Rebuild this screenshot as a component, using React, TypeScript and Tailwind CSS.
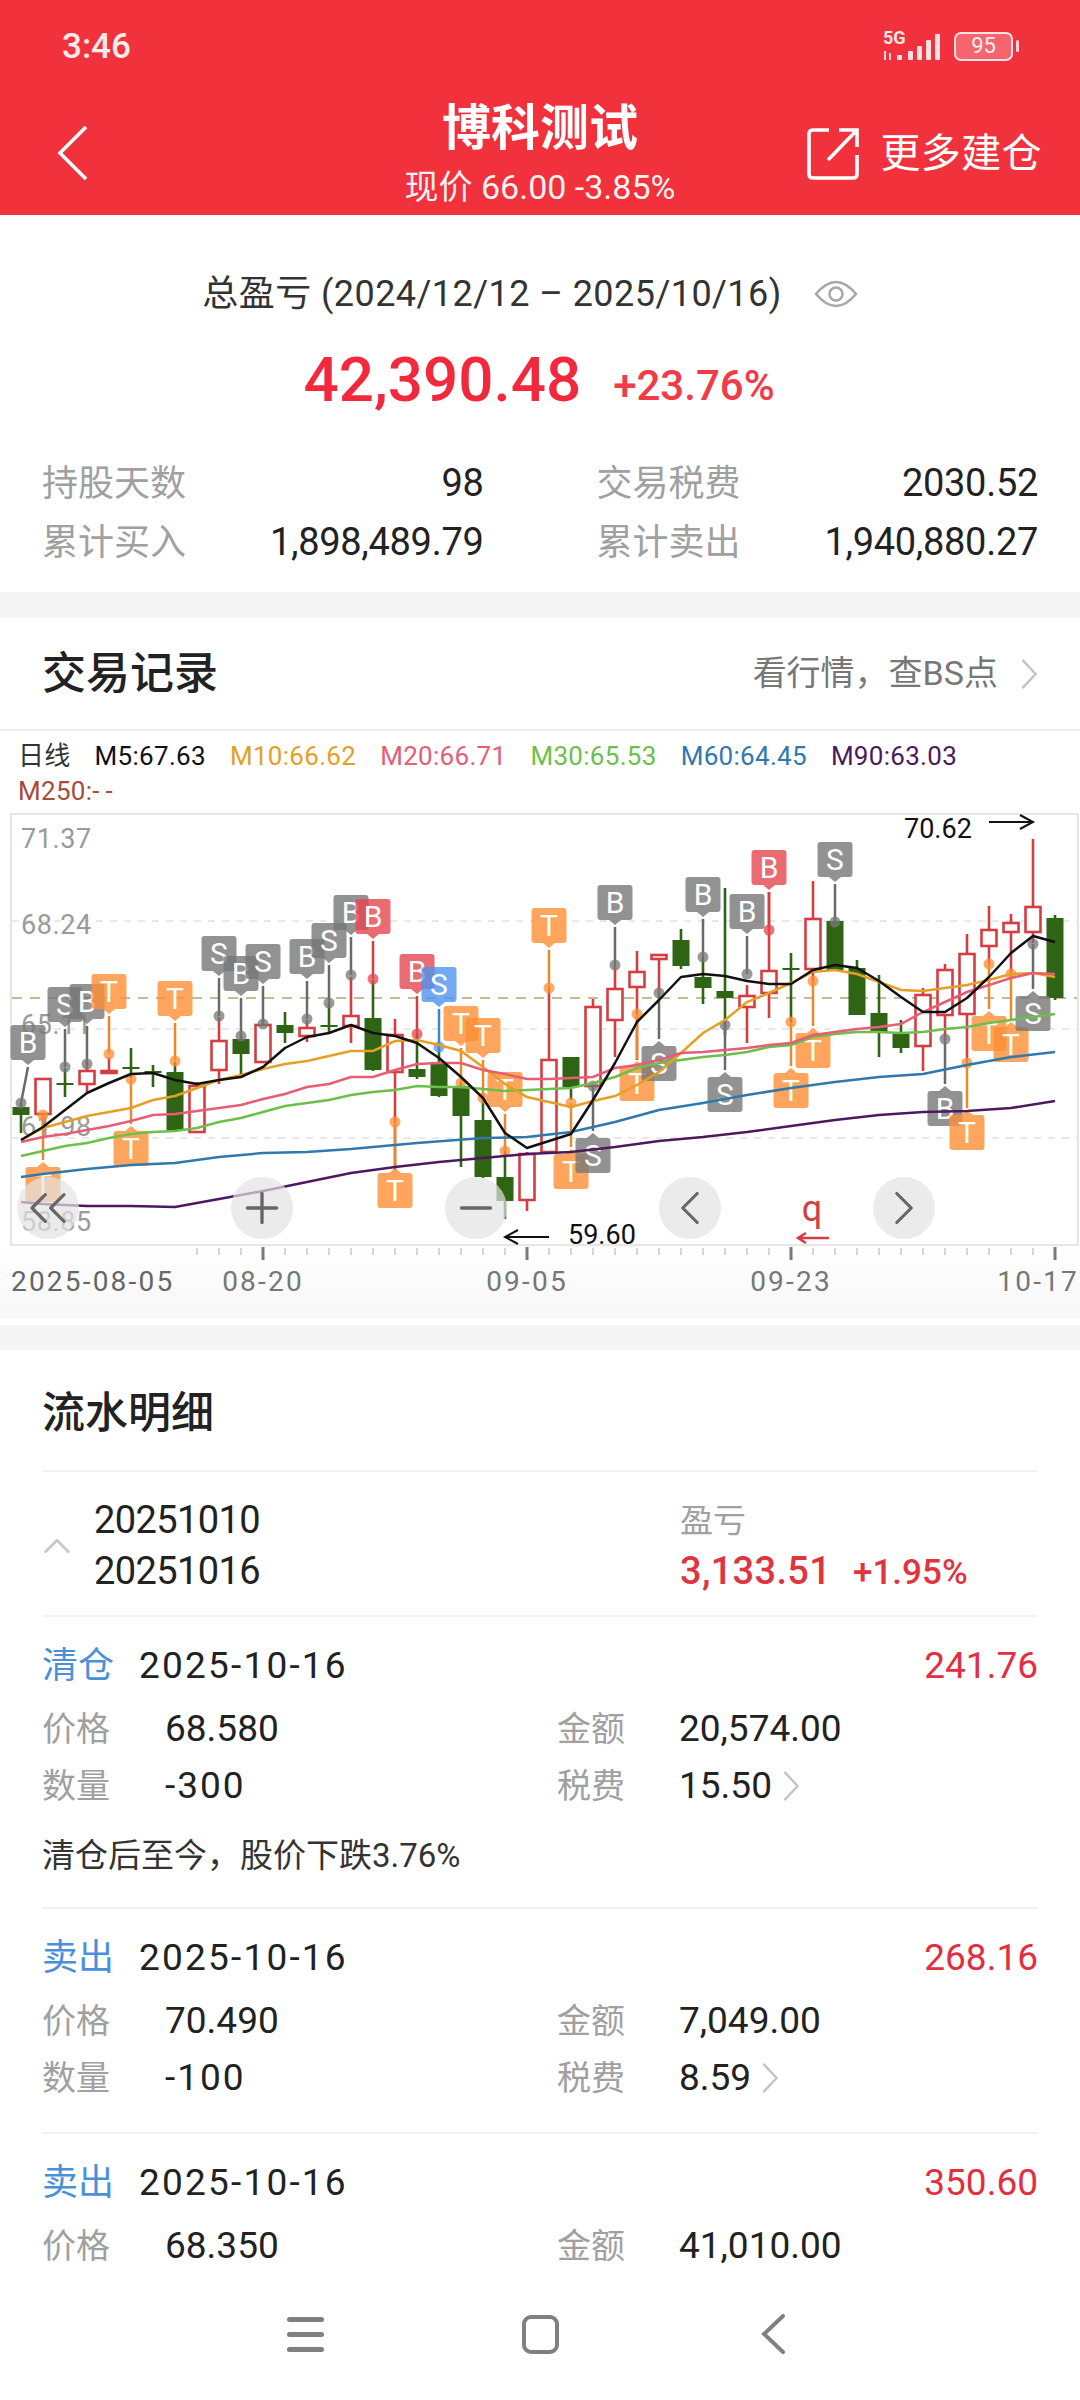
import { ChevronRight, ChevronLeft, ChevronUp, ChevronsLeft, Minus, Plus } from "lucide-react";
import type { ReactNode } from "react";

const font = '"Roboto","Noto Sans CJK SC",sans-serif';

const xAt = (i: number) => 21 + 22 * i;

// colour, wick top, body top, body bottom, wick bottom (page y)
type Candle = ["r" | "g", number, number, number, number];
const candles: Candle[] = [
  ["g", 1103, 1107, 1115, 1133],
  ["r", 1078, 1078, 1115, 1127],
  ["g", 1068, 1083, 1085, 1097],
  ["r", 1063, 1070, 1085, 1093],
  ["r", 1057, 1070, 1072, 1074],
  ["g", 1048, 1067, 1069, 1078],
  ["g", 1065, 1071, 1073, 1087],
  ["g", 1062, 1072, 1131, 1131],
  ["r", 1082, 1085, 1133, 1133],
  ["r", 1017, 1040, 1071, 1084],
  ["g", 1033, 1039, 1054, 1077],
  ["r", 1020, 1024, 1063, 1063],
  ["g", 1012, 1025, 1033, 1043],
  ["r", 1020, 1027, 1037, 1042],
  ["g", 1003, 1025, 1027, 1032],
  ["r", 977, 1015, 1027, 1043],
  ["g", 980, 1018, 1070, 1071],
  ["r", 1019, 1034, 1073, 1170],
  ["g", 1033, 1069, 1077, 1079],
  ["g", 1045, 1062, 1096, 1097],
  ["g", 1082, 1086, 1116, 1167],
  ["g", 1093, 1120, 1177, 1178],
  ["g", 1148, 1177, 1201, 1219],
  ["r", 1152, 1153, 1201, 1211],
  ["r", 988, 1059, 1153, 1153],
  ["g", 1057, 1057, 1087, 1100],
  ["r", 999, 1006, 1087, 1087],
  ["r", 965, 988, 1021, 1057],
  ["r", 951, 971, 988, 1060],
  ["r", 954, 954, 960, 993],
  ["g", 929, 940, 966, 969],
  ["g", 957, 977, 988, 1004],
  ["g", 888, 991, 998, 1035],
  ["r", 985, 995, 1008, 1043],
  ["r", 892, 970, 994, 1018],
  ["g", 953, 968, 970, 1022],
  ["r", 881, 918, 970, 985],
  ["g", 918, 921, 970, 970],
  ["g", 960, 968, 1015, 1015],
  ["g", 975, 1013, 1032, 1057],
  ["g", 1020, 1034, 1048, 1053],
  ["r", 988, 994, 1047, 1071],
  ["r", 964, 969, 1016, 1040],
  ["r", 934, 953, 1015, 1063],
  ["r", 906, 929, 947, 965],
  ["r", 914, 922, 933, 977],
  ["r", 839, 906, 933, 943],
  ["g", 915, 918, 998, 1000],
];

type MarkKind = "gray" | "orange" | "red" | "blue";
// candle index, letter, colour, badge top, dot y, badge x override
type Mark = [number, string, MarkKind, number, number, number?];
const marksAbove: Mark[] = [
  [0, "B", "gray", 1025, 1103, 28],
  [2, "S", "gray", 987, 1067],
  [3, "B", "gray", 984, 1064],
  [4, "T", "orange", 974, 1054],
  [7, "T", "orange", 981, 1061],
  [9, "S", "gray", 936, 1016],
  [10, "B", "gray", 956, 1036],
  [11, "S", "gray", 944, 1024],
  [13, "B", "gray", 939, 1019],
  [14, "S", "gray", 923, 1003],
  [15, "B", "gray", 895, 975],
  [16, "B", "red", 899, 979],
  [18, "B", "red", 954, 1034],
  [19, "S", "blue", 967, 1047],
  [20, "T", "orange", 1006, 1083],
  [21, "T", "orange", 1018, 1098],
  [22, "T", "orange", 1072, 1151],
  [24, "T", "orange", 908, 988],
  [27, "B", "gray", 885, 965],
  [31, "B", "gray", 877, 957],
  [33, "B", "gray", 894, 974],
  [34, "B", "red", 850, 930],
  [37, "S", "gray", 842, 922],
];
const marksBelow: Mark[] = [
  [1, "T", "orange", 1167, 1115],
  [5, "T", "orange", 1131, 1079],
  [17, "T", "orange", 1173, 1122],
  [25, "T", "orange", 1154, 1103],
  [26, "S", "gray", 1138, 1086],
  [28, "T", "orange", 1066, 1014],
  [29, "S", "gray", 1046, 993],
  [32, "S", "gray", 1077, 1025],
  [35, "T", "orange", 1073, 1022],
  [36, "T", "orange", 1033, 981],
  [42, "B", "gray", 1091, 1039],
  [43, "T", "orange", 1115, 1063],
  [44, "T", "orange", 1016, 964],
  [45, "T", "orange", 1027, 974],
  [46, "S", "gray", 996, 944],
];

const markFill: Record<MarkKind, string> = {
  gray: "#777777",
  orange: "#ff8f35",
  red: "#e5474f",
  blue: "#4e93ef",
};
const markLine: Record<MarkKind, string> = {
  gray: "#6a6a6a",
  orange: "#e8892b",
  red: "#d43d42",
  blue: "#3f85c9",
};

const m5 = [1140, 1127, 1110, 1093, 1083, 1074, 1073, 1080, 1084, 1080, 1077, 1067, 1048, 1037, 1033, 1025, 1033, 1036, 1043, 1058, 1077, 1098, 1133, 1148, 1141, 1134, 1100, 1063, 1022, 1000, 977, 974, 976, 981, 984, 984, 970, 965, 968, 981, 997, 1012, 1012, 998, 977, 953, 936, 942];
const m10 = [1140, 1128, 1122, 1116, 1112, 1108, 1100, 1096, 1088, 1080, 1075, 1069, 1064, 1061, 1056, 1051, 1051, 1041, 1040, 1045, 1051, 1067, 1084, 1097, 1102, 1107, 1101, 1096, 1085, 1072, 1053, 1033, 1020, 1002, 993, 983, 972, 970, 974, 982, 990, 991, 988, 985, 980, 974, 973, 977];
const m20 = [1142, 1137, 1134, 1130, 1126, 1121, 1115, 1114, 1111, 1108, 1105, 1099, 1094, 1087, 1084, 1077, 1077, 1070, 1064, 1063, 1063, 1070, 1074, 1079, 1079, 1078, 1077, 1068, 1065, 1060, 1053, 1052, 1050, 1048, 1045, 1043, 1035, 1032, 1029, 1027, 1024, 1012, 1002, 992, 985, 978, 973, 974];
const m30 = [1156, 1151, 1146, 1143, 1138, 1134, 1132, 1131, 1128, 1122, 1118, 1112, 1106, 1103, 1100, 1095, 1092, 1090, 1086, 1087, 1087, 1089, 1091, 1090, 1089, 1088, 1083, 1077, 1068, 1063, 1060, 1057, 1055, 1052, 1047, 1045, 1037, 1034, 1032, 1032, 1033, 1032, 1029, 1027, 1023, 1020, 1017, 1014];
// not every candle was read for the two slow lines
const m60 = [1177, 1174, 1169, 1165, 1163, 1157, 1153, 1152, 1149, 1147, 1143, 1138, 1137, 1132, 1122, 1110, 1103, 1095, 1088, 1082, 1077, 1074, 1065, 1057, 1052];
const m60x = [0, 1, 3, 5, 7, 9, 11, 13, 15, 16, 18, 21, 23, 25, 27, 29, 31, 33, 35, 37, 39, 41, 43, 45, 47];
const m90 = [1202, 1204, 1206, 1206, 1207, 1199, 1191, 1182, 1173, 1167, 1162, 1158, 1154, 1152, 1147, 1141, 1137, 1132, 1126, 1120, 1115, 1112, 1111, 1108, 1101];
const m90x = [0, 1, 3, 5, 7, 9, 11, 13, 15, 17, 19, 21, 23, 25, 27, 29, 31, 33, 35, 37, 39, 41, 43, 45, 47];

const toPoints = (ys: number[], idx?: number[]) =>
  ys.map((y, i) => `${xAt(idx ? idx[i] : i)},${y}`).join(" ");

const Badge = ({ mark, below }: { mark: Mark; below?: boolean }) => {
  const [i, letter, kind, top, dotY, bx] = mark;
  const x = xAt(i);
  const cx = bx ?? x;
  const l = cx - 17.5;
  const r = cx + 17.5;
  const b = top + 35;
  const shape = below
    ? `M${l + 3} ${top} H${cx - 6} L${cx} ${top - 5} L${cx + 6} ${top} H${r - 3} Q${r} ${top} ${r} ${top + 3} V${b - 3} Q${r} ${b} ${r - 3} ${b} H${l + 3} Q${l} ${b} ${l} ${b - 3} V${top + 3} Q${l} ${top} ${l + 3} ${top} Z`
    : `M${l + 3} ${top} H${r - 3} Q${r} ${top} ${r} ${top + 3} V${b - 3} Q${r} ${b} ${r - 3} ${b} H${cx + 6} L${cx} ${b + 5} L${cx - 6} ${b} H${l + 3} Q${l} ${b} ${l} ${b - 3} V${top + 3} Q${l} ${top} ${l + 3} ${top} Z`;
  return (
    <g>
      <line
        x1={cx}
        y1={below ? top - 7 : b + 7}
        x2={x}
        y2={dotY}
        stroke={markLine[kind]}
        strokeWidth={2.5}
      />
      <circle cx={x} cy={dotY} r={5.5} fill={markFill[kind]} fillOpacity={0.75} />
      <path d={shape} fill={markFill[kind]} fillOpacity={0.8} />
      <text x={cx} y={top + 28} textAnchor="middle" fontSize={30} fill="#fff">
        {letter}
      </text>
    </g>
  );
};

const CandleBar = ({ c, i }: { c: Candle; i: number }) => {
  const [kind, wt, bt, bb, wb] = c;
  const x = xAt(i);
  const color = kind === "r" ? "#d43d42" : "#2f6414";
  return (
    <g>
      <line x1={x} x2={x} y1={wt} y2={bt} stroke={color} strokeWidth={2.6} />
      <line x1={x} x2={x} y1={bb} y2={wb} stroke={color} strokeWidth={2.6} />
      {kind === "r" ? (
        <rect x={x - 7.5} y={bt + 1} width={15} height={Math.max(bb - bt - 2, 2)} fill="#fff" stroke={color} strokeWidth={2.6} />
      ) : (
        <rect x={x - 8.5} y={bt} width={17} height={bb - bt} fill={color} />
      )}
    </g>
  );
};

const axisLabels = [
  { y: 848, t: "71.37" },
  { y: 934, t: "68.24" },
  { y: 1034, t: "65.11" },
  { y: 1136, t: "61.98" },
  { y: 1231, t: "58.85" },
];

const KlineChart = () => (
  <svg width={1080} height={433} viewBox="0 813 1080 433" className="block" style={{ fontFamily: font }}>
    <rect x={11} y={814} width={1067} height={431} fill="#fff" stroke="#e6e6e6" strokeWidth={2} />
    {[921, 1029, 1138].map((y) => (
      <line key={y} x1={12} x2={1077} y1={y} y2={y} stroke="#e2e2e2" strokeWidth={1.5} strokeDasharray="7 7" />
    ))}
    <line x1={12} x2={1077} y1={998} y2={998} stroke="#b9a070" strokeWidth={1.5} strokeDasharray="10 8" />
    {axisLabels.map((a) => (
      <text key={a.t} x={21} y={a.y} fontSize={27} fill="#9a9a9a" letterSpacing={0.6}>
        {a.t}
      </text>
    ))}
    {candles.map((c, i) => (
      <CandleBar key={i} c={c} i={i} />
    ))}
    {marksBelow.map((m) => (
      <Badge key={m[0]} mark={m} below />
    ))}
    {marksAbove.map((m) => (
      <Badge key={m[0]} mark={m} />
    ))}
    <polyline points={toPoints(m90, m90x)} fill="none" stroke="#4c1a5c" strokeWidth={2.5} />
    <polyline points={toPoints(m60, m60x)} fill="none" stroke="#2f79ac" strokeWidth={2.5} />
    <polyline points={toPoints(m30)} fill="none" stroke="#6cbf4b" strokeWidth={2.5} />
    <polyline points={toPoints(m10)} fill="none" stroke="#e5a024" strokeWidth={2.5} />
    <polyline points={toPoints(m20)} fill="none" stroke="#e85d75" strokeWidth={2.5} />
    <polyline points={toPoints(m5)} fill="none" stroke="#111" strokeWidth={2.5} strokeLinejoin="round" />
    <text x={904} y={838} fontSize={27} fill="#111">70.62</text>
    <path d="M989 822 H1033 M1020 815 L1033 822 L1020 829" fill="none" stroke="#111" strokeWidth={2} />
    <text x={568} y={1244} fontSize={27} fill="#111">59.60</text>
    <path d="M549 1237 H505 M518 1230 L505 1237 L518 1244" fill="none" stroke="#111" strokeWidth={2} />
    <text x={812} y={1221} textAnchor="middle" fontSize={36} fill="#d43d42">q</text>
    <path d="M829 1238 H798 M806 1233 L798 1238 L806 1243" fill="none" stroke="#d43d42" strokeWidth={2.5} />
  </svg>
);

const XAxis = () => (
  <svg width={1080} height={72} className="block" style={{ fontFamily: font }}>
    {candles.map((_, i) =>
      i < 8 ? null : (
        <line key={i} x1={xAt(i)} x2={xAt(i)} y1={2} y2={9} stroke="#c8c8c8" strokeWidth={1.5} />
      ),
    )}
    {[263, 527, 791, 1055].map((x) => (
      <line key={x} x1={x} x2={x} y1={1} y2={14} stroke="#7a7a7a" strokeWidth={3} />
    ))}
    <text x={11} y={45} fontSize={28} fill="#666" letterSpacing={2.2}>2025-08-05</text>
    <text x={263} y={45} textAnchor="middle" fontSize={28} fill="#777" letterSpacing={2.2}>08-20</text>
    <text x={527} y={45} textAnchor="middle" fontSize={28} fill="#777" letterSpacing={2.2}>09-05</text>
    <text x={791} y={45} textAnchor="middle" fontSize={28} fill="#777" letterSpacing={2.2}>09-23</text>
    <text x={1079} y={45} textAnchor="end" fontSize={28} fill="#777" letterSpacing={2.2}>10-17</text>
  </svg>
);

const ChartButton = ({ className, children }: { className: string; children: ReactNode }) => (
  <div className={`absolute top-[364px] flex h-[62px] w-[62px] items-center justify-center rounded-full bg-[#e2e2e2]/70 text-[#666] ${className}`}>
    {children}
  </div>
);

const legend = [
  { t: "M5:67.63", c: "text-[#111]" },
  { t: "M10:66.62", c: "text-[#e5a024]" },
  { t: "M20:66.71", c: "text-[#e85d75]" },
  { t: "M30:65.53", c: "text-[#6cbf4b]" },
  { t: "M60:64.45", c: "text-[#2f79ac]" },
  { t: "M90:63.03", c: "text-[#4c1a5c]" },
];

const Stat = ({ label, value }: { label: string; value: string }) => (
  <div className="flex h-[59px] items-center justify-between">
    <span className="text-[36px] text-[#a0a0a0]">{label}</span>
    <span className="text-[38px] tracking-[-0.3px] text-[#222]">{value}</span>
  </div>
);

const Chevron = ({ className }: { className: string }) => (
  <svg viewBox="0 0 18 34" className={className} fill="none" stroke="#c4c4c4" strokeWidth={2.6}>
    <path d="M2 2 L16 17 L2 32" />
  </svg>
);

type Trade = {
  kind: string;
  pnl: string;
  price: string;
  amount: string;
  qty?: string;
  tax?: string;
  note?: string;
  rowClass: string;
};

const trades: Trade[] = [
  { kind: "清仓", pnl: "241.76", price: "68.580", amount: "20,574.00", qty: "-300", tax: "15.50", note: "清仓后至今，股价下跌3.76%", rowClass: "h-[292px]" },
  { kind: "卖出", pnl: "268.16", price: "70.490", amount: "7,049.00", qty: "-100", tax: "8.59", rowClass: "h-[225px]" },
  { kind: "卖出", pnl: "350.60", price: "68.350", amount: "41,010.00", rowClass: "h-[147px]" },
];

const TradeRow = ({ trade, last }: { trade: Trade; last?: boolean }) => (
  <div className={`${trade.rowClass} ${last ? "" : "border-b-2 border-[#f1f1f1]"}`}>
    <div className="flex h-[95px] items-center pt-[2px] text-[37px]">
      <span className="w-[97px] text-[36px] text-[#4a90d9]">{trade.kind}</span>
      <span className="tracking-[2.2px] text-[#222]">2025-10-16</span>
      <span className="ml-auto text-[#e32e3f]">{trade.pnl}</span>
    </div>
    <div className="-mt-[9px] flex h-[48px] items-center pt-[4px] text-[37px] text-[#222]">
      <span className="w-[123px] text-[34px] text-[#a0a0a0]">价格</span>
      <span className="w-[392px]">{trade.price}</span>
      <span className="w-[122px] text-[34px] text-[#a0a0a0]">金额</span>
      <span>{trade.amount}</span>
    </div>
    {trade.qty && (
      <div className="mt-[11px] flex h-[48px] items-center text-[37px] text-[#222]">
        <span className="w-[123px] text-[34px] text-[#a0a0a0]">数量</span>
        <span className="w-[392px] tracking-[2px]">{trade.qty}</span>
        <span className="w-[122px] text-[34px] text-[#a0a0a0]">税费</span>
        <span>{trade.tax}</span>
        <Chevron className="ml-[10px] h-[32px] w-[18px]" />
      </div>
    )}
    {trade.note && (
      <p className="mt-[24px] text-[33px] leading-[44px] text-[#333]">{trade.note}</p>
    )}
  </div>
);

export default function App() {
  return (
    <main className="flex h-[2400px] w-[1080px] flex-col overflow-hidden bg-white" style={{ fontFamily: font }}>
      <header className="h-[215px] shrink-0 bg-[#f1323c] text-white">
        <div className="flex h-[80px] items-center justify-between pl-[62px] pr-[61px] pt-[12px]">
          <span className="text-[35px] font-medium leading-none text-white/90">3:46</span>
          <div className="flex items-center">
            <svg width={60} height={32} viewBox="0 0 60 32" className="mr-[11px]">
              <text x={0} y={14} fontSize={18} fontWeight={700} fill="#fff" fillOpacity={0.9}>5G</text>
              <path d="M2 21 V30 M7 23 V30" stroke="#fff" strokeOpacity={0.8} strokeWidth={2} />
              <rect x={14} y={25} width={5} height={5} rx={1} fill="#fff" fillOpacity={0.85} />
              <rect x={25} y={21} width={5} height={9} rx={1} fill="#fff" fillOpacity={0.85} />
              <rect x={34} y={16} width={5} height={14} rx={1} fill="#fff" fillOpacity={0.85} />
              <rect x={43} y={10} width={5} height={20} rx={1} fill="#fff" fillOpacity={0.85} />
              <rect x={52} y={4} width={5} height={26} rx={1} fill="#fff" fillOpacity={0.85} />
            </svg>
            <div className="flex h-[29px] w-[59px] items-center justify-center rounded-[7px] border-2 border-white/80 bg-white/25 text-[22px] leading-none text-white/90">
              95
            </div>
            <div className="ml-[3px] h-[12px] w-[3px] rounded bg-white/80" />
          </div>
        </div>
        <div className="relative flex h-[135px] flex-col items-center">
          <h1 className="pt-[17px] text-[49px] font-bold leading-[64px]">博科测试</h1>
          <p className="pt-[4px] text-[34px] leading-[44px] text-white/95">现价 66.00 -3.85%</p>
          <svg width={32} height={56} viewBox="0 0 32 56" fill="none" stroke="#fff" strokeWidth={3.6} className="absolute left-[57px] top-[46px]">
            <path d="M29 1 L3 27 L29 53" />
          </svg>
          <div className="absolute right-[38px] top-[47px] flex items-center">
            <svg width={54} height={54} viewBox="0 0 54 54" fill="none" stroke="#fff" strokeWidth={3.6} className="mr-[19px]">
              <path d="M22 3 H6 Q2 3 2 7 V47 Q2 51 6 51 H46 Q50 51 50 47 V28" />
              <path d="M21 33 L49 4 M32 3 H50 V20" />
            </svg>
            <span className="text-[40px] leading-none tracking-[0.4px]">更多建仓</span>
          </div>
        </div>
      </header>

      <section className="h-[377px] shrink-0 px-[42px]">
        <div className="flex h-[153px] items-center justify-center pr-[20px] pt-[4px] text-[36px] tracking-[0.45px] text-[#333]">
          <span>总盈亏 (2024/12/12 – 2025/10/16)</span>
          <svg width={44} height={36} viewBox="0 0 44 36" fill="none" stroke="#a8a8a8" strokeWidth={2.6} className="ml-[32px]">
            <path d="M2 18 Q22 -6 42 18 Q22 42 2 18 Z" />
            <circle cx={22} cy={18} r={6.5} />
          </svg>
        </div>
        <div className="flex h-[24px] items-center justify-center pr-[2px]">
          <span className="text-[62px] font-medium leading-none text-[#f2293d]">42,390.48</span>
          <span className="ml-[32px] mt-[12px] text-[42px] font-medium leading-none text-[#f23a48]">+23.76%</span>
        </div>
        <div className="mt-[62px] grid grid-cols-2 gap-x-[113px]">
          <Stat label="持股天数" value="98" />
          <Stat label="交易税费" value="2030.52" />
          <Stat label="累计买入" value="1,898,489.79" />
          <Stat label="累计卖出" value="1,940,880.27" />
        </div>
      </section>

      <div className="h-[26px] shrink-0 bg-[#f5f5f5]" />

      <section className="shrink-0">
        <div className="flex h-[113px] items-center justify-between border-b-2 border-[#eeeeee] px-[42px]">
          <h2 className="text-[44px] font-medium text-[#222]">交易记录</h2>
          <div className="flex items-center text-[34px] text-[#777]">
            看行情，查BS点
            <Chevron className="ml-[22px] h-[32px] w-[18px]" />
          </div>
        </div>
        <div className="flex h-[82px] flex-wrap content-start items-center gap-x-[24px] pl-[18px] pt-[8px] text-[26px] leading-[35px] tracking-[0.3px]">
          <span className="text-[#333]">日线</span>
          {legend.map((m) => (
            <span key={m.t} className={m.c}>
              {m.t}
            </span>
          ))}
          <span className="w-full text-[#a84b3c]">
            M250:<span className="tracking-[6px]">--</span>
          </span>
        </div>
        <div className="relative">
          <KlineChart />
          <ChartButton className="left-[17px]">
            <ChevronsLeft size={64} strokeWidth={1.2} className="shrink-0" />
          </ChartButton>
          <ChartButton className="left-[231px]">
            <Plus size={50} strokeWidth={1.6} className="shrink-0" />
          </ChartButton>
          <ChartButton className="left-[445px]">
            <Minus size={50} strokeWidth={1.6} className="shrink-0" />
          </ChartButton>
          <ChartButton className="left-[659px]">
            <ChevronLeft size={58} strokeWidth={1.3} className="shrink-0" />
          </ChartButton>
          <ChartButton className="left-[873px]">
            <ChevronRight size={58} strokeWidth={1.3} className="shrink-0" />
          </ChartButton>
        </div>
        <div className="bg-gradient-to-b from-white to-[#f7f7f7]">
          <XAxis />
        </div>
      </section>

      <div className="mt-[7px] h-[25px] shrink-0 bg-[#f5f5f5]" />

      <section className="min-h-0 flex-1 overflow-hidden px-[42px]">
        <h2 className="flex h-[122px] items-center border-b-2 border-[#f1f1f1] pt-[6px] text-[43px] font-medium text-[#222]">流水明细</h2>
        <div className="flex h-[145px] items-center border-b-2 border-[#f1f1f1] pt-[5px]">
          <ChevronUp size={46} strokeWidth={1.4} className="-ml-[8px] mr-[14px] text-[#c8c8c8]" />
          <div className="w-[586px] text-[38px] leading-[51px] tracking-[-0.6px] text-[#222]">
            <div>20251010</div>
            <div>20251016</div>
          </div>
          <div>
            <div className="text-[33px] leading-[51px] text-[#a0a0a0]">盈亏</div>
            <div className="flex items-baseline leading-[51px]">
              <span className="text-[38px] font-medium tracking-[0.3px] text-[#e0343e]">3,133.51</span>
              <span className="ml-[22px] text-[35px] font-medium text-[#e0343e]">+1.95%</span>
            </div>
          </div>
        </div>
        {trades.map((t, i) => (
          <TradeRow key={i} trade={t} last={i === trades.length - 1} />
        ))}
      </section>

      <nav className="flex h-[120px] shrink-0 items-start bg-white pl-[287px] pt-[34px]">
        <div className="flex items-center">
          <div className="flex w-[37px] flex-col gap-[10px]">
            <div className="h-[5px] rounded bg-[#808080]" />
            <div className="h-[5px] rounded bg-[#808080]" />
            <div className="h-[5px] rounded bg-[#808080]" />
          </div>
          <div className="ml-[198px] h-[39px] w-[37px] rounded-[9px] border-[4px] border-[#808080]" />
          <svg width={24} height={40} viewBox="0 0 24 40" fill="none" stroke="#808080" strokeWidth={4} strokeLinecap="round" className="ml-[202px]">
            <path d="M22 2 L3 20 L22 38" />
          </svg>
        </div>
      </nav>
    </main>
  );
}
